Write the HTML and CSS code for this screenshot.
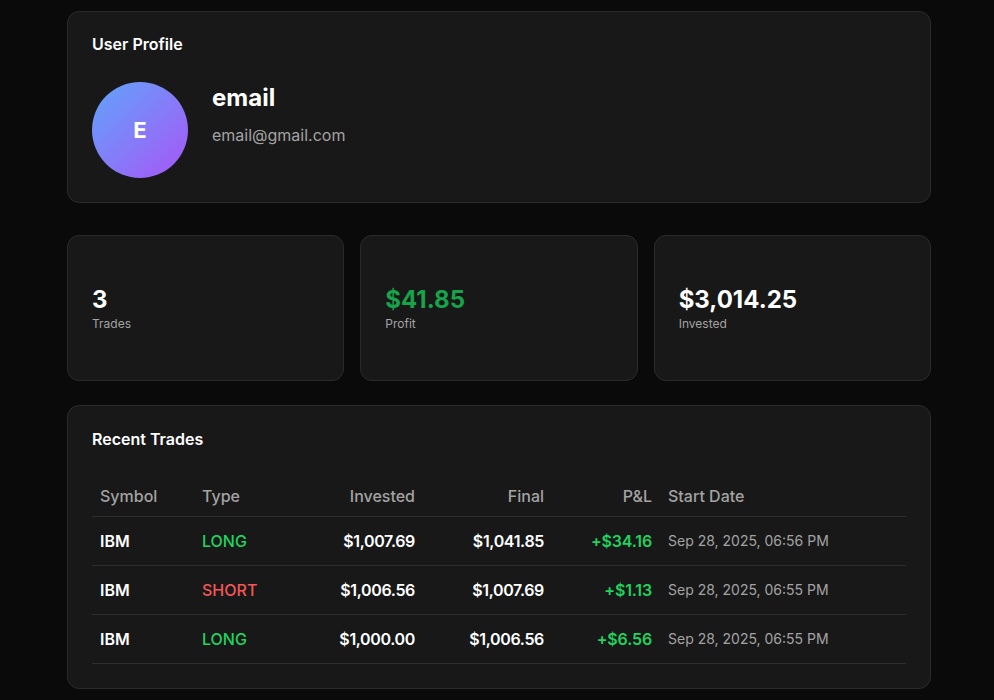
FILE: index.html
```html
<!DOCTYPE html>
<html>
<head>
<meta charset="utf-8">
<link rel="stylesheet" href="styles.css">
</head>
<body>
<main class="page">
  <section class="card profile">
    <h2 class="card-title">User Profile</h2>
    <div class="profile-body">
      <div class="avatar">E</div>
      <div class="profile-info">
        <div class="profile-name">email</div>
        <div class="profile-email">email@gmail.com</div>
      </div>
    </div>
  </section>

  <section class="stats">
    <div class="card stat">
      <div class="stat-value">3</div>
      <div class="stat-label">Trades</div>
    </div>
    <div class="card stat">
      <div class="stat-value profit">$41.85</div>
      <div class="stat-label">Profit</div>
    </div>
    <div class="card stat">
      <div class="stat-value">$3,014.25</div>
      <div class="stat-label">Invested</div>
    </div>
  </section>

  <section class="card trades">
    <h2 class="card-title">Recent Trades</h2>
    <table class="trade-table">
      <colgroup>
        <col class="c-sym"><col class="c-type"><col class="c-inv"><col class="c-fin"><col class="c-pnl"><col class="c-date">
      </colgroup>
      <thead>
        <tr>
          <th>Symbol</th>
          <th>Type</th>
          <th class="num">Invested</th>
          <th class="num">Final</th>
          <th class="num">P&amp;L</th>
          <th>Start Date</th>
        </tr>
      </thead>
      <tbody>
        <tr>
          <td class="sym">IBM</td>
          <td class="long">LONG</td>
          <td class="num money">$1,007.69</td>
          <td class="num money">$1,041.85</td>
          <td class="num gain">+$34.16</td>
          <td class="date">Sep 28, 2025, 06:56 PM</td>
        </tr>
        <tr>
          <td class="sym">IBM</td>
          <td class="short">SHORT</td>
          <td class="num money">$1,006.56</td>
          <td class="num money">$1,007.69</td>
          <td class="num gain">+$1.13</td>
          <td class="date">Sep 28, 2025, 06:55 PM</td>
        </tr>
        <tr>
          <td class="sym">IBM</td>
          <td class="long">LONG</td>
          <td class="num money">$1,000.00</td>
          <td class="num money">$1,006.56</td>
          <td class="num gain">+$6.56</td>
          <td class="date">Sep 28, 2025, 06:55 PM</td>
        </tr>
      </tbody>
    </table>
  </section>
</main>
</body>
</html>
```

FILE: styles.css
```css
* { box-sizing: border-box; }

html, body {
  margin: 0;
  padding: 0;
  background: #0a0a0a;
  color: #ffffff;
  font-family: Inter, "Noto Sans", sans-serif;
}

.page {
  width: 864px;
  margin: 0 auto;
  padding-top: 11px;
  position: relative;
  left: 2px;
}

.card {
  background: #181818;
  border: 1px solid #2b2b2b;
  border-radius: 12px;
}

.card-title {
  margin: 0;
  font-size: 16px;
  line-height: 20px;
  font-weight: 600;
  color: #ffffff;
}

.profile {
  padding: 22px 24px 24px 24px;
}

.profile .card-title {
  margin-bottom: 28px;
}

.profile-body {
  display: flex;
  align-items: flex-start;
  gap: 24px;
}

.avatar {
  width: 96px;
  height: 96px;
  border-radius: 50%;
  background: linear-gradient(135deg, #60a5fa 0%, #a855f7 100%);
  display: flex;
  align-items: center;
  justify-content: center;
  font-size: 22px;
  font-weight: 700;
  color: #ffffff;
}

.profile-name {
  font-size: 24px;
  line-height: 32px;
  font-weight: 700;
}

.profile-email {
  margin-top: 9px;
  font-size: 16px;
  line-height: 24px;
  color: #a3a3a3;
}

.stats {
  display: grid;
  grid-template-columns: repeat(3, 1fr);
  gap: 16px;
  margin-top: 32px;
}

.stat {
  height: 146px;
  padding: 0 24px;
  display: flex;
  flex-direction: column;
  justify-content: center;
}

.stat-value {
  font-size: 24px;
  line-height: 32px;
  font-weight: 700;
  color: #ffffff;
}

.stat-value.profit {
  color: #16a34a;
}

.stat-label {
  font-size: 12px;
  line-height: 16px;
  color: #a3a3a3;
}

.trades {
  margin-top: 24px;
  padding: 23px 24px 24px 24px;
}

.trade-table {
  width: 100%;
  margin-top: 27px;
  border-collapse: collapse;
  table-layout: fixed;
}

.c-sym { width: 102px; }
.c-type { width: 100px; }
.c-inv { width: 129px; }
.c-fin { width: 129px; }
.c-pnl { width: 108px; }
.c-date { width: auto; }

.trade-table th {
  text-align: left;
  font-size: 16px;
  line-height: 24px;
  font-weight: 500;
  color: #a3a3a3;
  padding: 8px;
  border-bottom: 1px solid #2e2e2e;
}

.trade-table td {
  font-size: 16px;
  line-height: 24px;
  padding: 12px 8px;
  border-bottom: 1px solid #2e2e2e;
  white-space: nowrap;
}

.trade-table .num { text-align: right; }

.sym { font-weight: 600; color: #ffffff; }
.money { font-weight: 600; letter-spacing: -0.35px; color: #ffffff; }
.long { color: #1fd35f; font-weight: 500; }
.short { color: #f45656; font-weight: 500; }
.gain { color: #1fd35f; font-weight: 600; letter-spacing: -0.15px; }
.date { color: #a3a3a3; font-size: 14px !important; }
```
